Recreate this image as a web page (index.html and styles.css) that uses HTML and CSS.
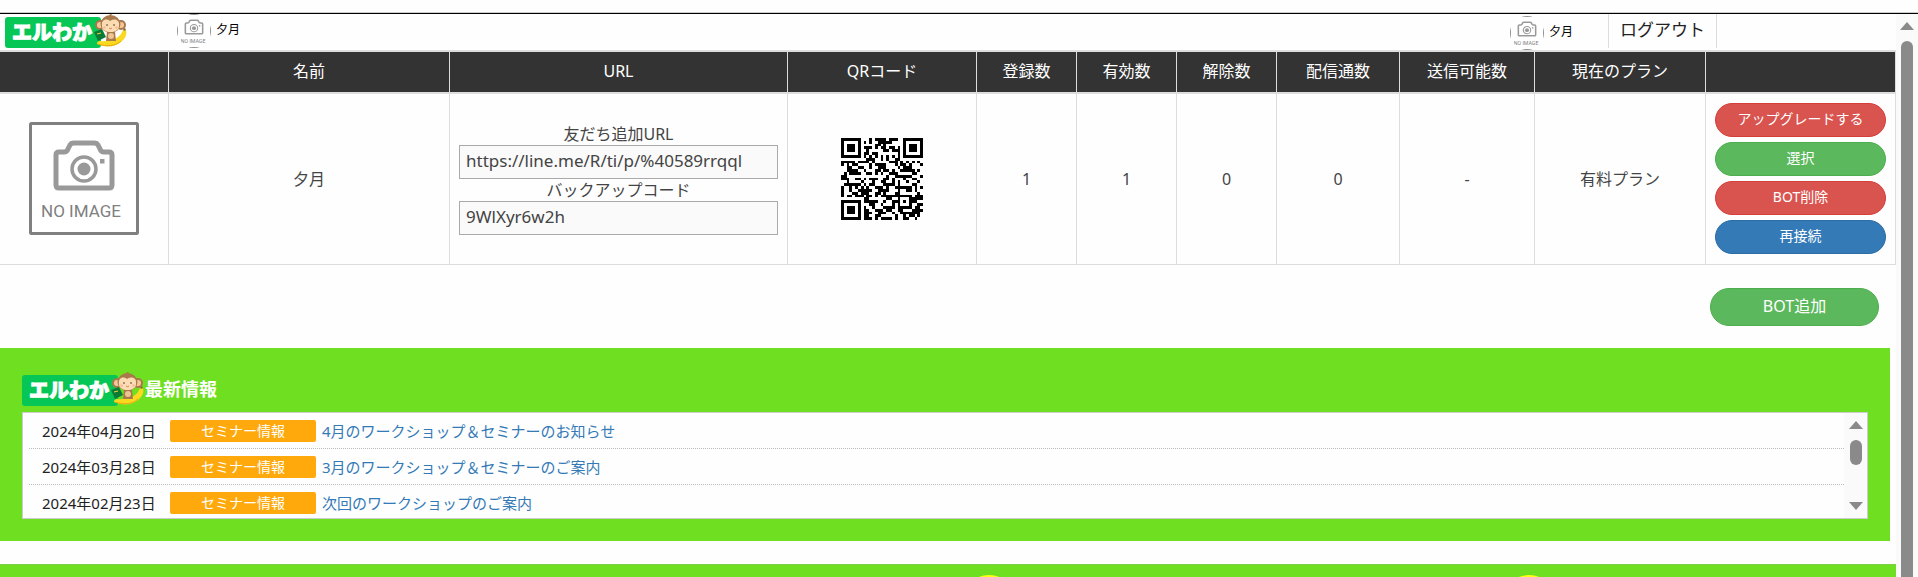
FILE: index.html
```html
<!DOCTYPE html>
<html lang="ja">
<head>
  <meta charset="UTF-8">
  <meta name="viewport" content="width=device-width, initial-scale=1.0">
  <title>エルわか</title>
  <link rel="stylesheet" href="styles.css">
</head>
<body>
  <svg class="defs" aria-hidden="true">
    <symbol id="no-image" viewBox="0 0 110 113" preserveAspectRatio="none">
      <rect width="110" height="113" fill="#fff"/>
      <rect x="1.5" y="1.5" width="107" height="110" rx="1" fill="none" stroke="#808080" stroke-width="3"/>
      <path d="M30 30h5q3 0 4-3l2-4q1-2 4-2h20q3 0 4 2l2 4q1 3 4 3h5q3 0 3 3v30q0 3-3 3H30q-3 0-3-3V33q0-3 3-3z" fill="none" stroke="#999" stroke-width="5"/>
      <circle cx="55" cy="47" r="12" fill="none" stroke="#999" stroke-width="3.5"/>
      <circle cx="55" cy="47" r="6.5" fill="#999"/>
      <rect x="71" y="37" width="4.5" height="4.5" fill="#999"/>
      <text class="no-image-text" x="52" y="95" text-anchor="middle">NO IMAGE</text>
    </symbol>
    <symbol id="logo" viewBox="0 0 122 34">
      <rect x="0" y="3" width="96" height="31" rx="3" fill="#06c755"/>
      <text class="logo-text" x="47" y="26" text-anchor="middle">エルわか</text>
      <path d="M119 15c4 1 3 9-3 13-6 5-15 6-24 2 0-2 1-3 3-3 10 1 19-2 22-9 1-1 1-2 2-3z" fill="#fbd91e"/>
      <path d="M93 30c9 3 18 2 23-3" fill="none" stroke="#e9a913" stroke-width="1"/>
      <path d="M118 15l2-1 1 2-2 1z" fill="#8a6a2a"/>
      <circle cx="95" cy="11" r="5" fill="#a9794b"/>
      <circle cx="116" cy="11" r="5" fill="#a9794b"/>
      <circle cx="95" cy="11" r="3" fill="#f6c79a"/>
      <circle cx="116" cy="11" r="3" fill="#f6c79a"/>
      <path d="M102 18h8l1 9h-10z" fill="#a9794b"/>
      <ellipse cx="106" cy="22" rx="3" ry="3" fill="#eec493"/>
      <path d="M105 2q-1-2 2-2" fill="none" stroke="#a9794b" stroke-width="1"/>
      <ellipse cx="105.5" cy="10" rx="10" ry="9" fill="#a9794b"/>
      <path d="M97 12c-1-6 4-8 8-5 5-3 10-1 9 5 0 4-4 6-8.5 6S97 16 97 12z" fill="#fddcb3"/>
      <circle cx="102" cy="11" r=".8" fill="#4a2f1a"/>
      <circle cx="109" cy="11" r=".8" fill="#4a2f1a"/>
      <circle cx="99.5" cy="13.5" r="1.3" fill="#f9b99c"/>
      <circle cx="111.5" cy="13.5" r="1.3" fill="#f9b99c"/>
      <path d="M104 14q1.5 1.500 3 0" fill="none" stroke="#b5653c" stroke-width=".7"/>
      <path d="M89 18l8-3 4 8-8 4z" fill="#0b7a35"/>
      <path d="M92 20l4-1" stroke="#f5d442" stroke-width="1"/>
    </symbol>
  </svg>

  <div class="top-line"></div>

  <div class="page">
    <main class="content">
      <header class="header">
        <a class="brand" href="#"><svg class="logo" role="img" aria-label="エルわか"><use href="#logo"/></svg></a>
        <div class="user">
          <svg class="avatar" aria-hidden="true"><use href="#no-image"/></svg>
          <span>夕月</span>
        </div>
        <div class="user user-right">
          <svg class="avatar" aria-hidden="true"><use href="#no-image"/></svg>
          <span>夕月</span>
        </div>
        <a class="logout" href="#">ログアウト</a>
      </header>

      <table class="bot-table">
        <colgroup>
          <col class="col-image">
          <col class="col-name">
          <col>
          <col class="col-qr">
          <col class="col-count">
          <col class="col-count">
          <col class="col-count">
          <col class="col-sent">
          <col class="col-limit">
          <col class="col-plan">
          <col class="col-action">
        </colgroup>
        <thead>
          <tr>
            <th></th>
            <th>名前</th>
            <th>URL</th>
            <th>QRコード</th>
            <th>登録数</th>
            <th>有効数</th>
            <th>解除数</th>
            <th>配信通数</th>
            <th>送信可能数</th>
            <th>現在のプラン</th>
            <th></th>
          </tr>
        </thead>
        <tbody>
          <tr>
            <td><svg class="bot-image" aria-hidden="true"><use href="#no-image"/></svg></td>
            <td>夕月</td>
            <td class="url-cell">
              <label for="friend-url">友だち追加URL</label>
              <input type="text" id="friend-url" value="https://line.me/R/ti/p/%40589rrqql" readonly>
              <label for="backup-code">バックアップコード</label>
              <input type="text" id="backup-code" value="9WlXyr6w2h" readonly>
            </td>
            <td><svg class="qr" id="qr" viewBox="0 0 29 29" shape-rendering="crispEdges"></svg></td>
            <td>1</td>
            <td>1</td>
            <td>0</td>
            <td>0</td>
            <td>-</td>
            <td>有料プラン</td>
            <td>
              <div class="actions">
                <button type="button" class="btn btn-danger">アップグレードする</button>
                <button type="button" class="btn btn-success">選択</button>
                <button type="button" class="btn btn-danger">BOT削除</button>
                <button type="button" class="btn btn-primary">再接続</button>
              </div>
            </td>
          </tr>
        </tbody>
      </table>

      <div class="add-area">
        <button type="button" class="btn btn-success btn-add">BOT追加</button>
      </div>

      <section class="news">
        <h2 class="news-title"><svg class="logo" role="img" aria-label="エルわか"><use href="#logo"/></svg>最新情報</h2>
        <div class="news-box">
          <ul class="news-list">
            <li><span class="date">2024年04月20日</span><span class="tag">セミナー情報</span><a href="#">4月のワークショップ＆セミナーのお知らせ</a></li>
            <li><span class="date">2024年03月28日</span><span class="tag">セミナー情報</span><a href="#">3月のワークショップ＆セミナーのご案内</a></li>
            <li><span class="date">2024年02月23日</span><span class="tag">セミナー情報</span><a href="#">次回のワークショップのご案内</a></li>
          </ul>
          <div class="scroll scroll-news">
            <span class="arrow-up"></span>
            <span class="thumb"></span>
            <span class="arrow-down"></span>
          </div>
        </div>
      </section>

      <section class="steps">
        <span class="circle"></span>
        <span class="circle"></span>
      </section>
    </main>

    <div class="scroll scroll-page">
      <span class="arrow-up"></span>
      <span class="thumb"></span>
    </div>
  </div>

  <script src="qr.js"></script>
</body>
</html>
```
FILE: styles.css
```css
* {
  box-sizing: border-box;
}

body {
  margin: 0;
  height: 100vh;
  display: flex;
  flex-direction: column;
  overflow: hidden;
  background: #fefefe;
  color: #444;
  font-family: "Noto Sans", "Noto Sans CJK JP", sans-serif;
  font-size: 16px;
  line-height: 22px;
}

a {
  color: #337ab7;
  text-decoration: none;
}

.defs {
  display: none;
}

.no-image-text {
  font-family: Roboto, sans-serif;
  font-size: 17px;
  fill: #808080;
}

.logo-text {
  font-family: "Noto Sans CJK JP", sans-serif;
  font-size: 20px;
  font-weight: 900;
  fill: #fff;
  stroke: #fff;
  stroke-width: 1px;
  stroke-linejoin: round;
}

.top-line {
  flex: none;
  height: 14px;
  border-bottom: 1px solid #000;
  box-shadow: inset 0 -1px #ccc;
}

.page {
  flex: 1;
  min-height: 0;
  display: flex;
}

.content {
  flex: 1;
  min-width: 0;
  display: flex;
  flex-direction: column;
}

/* header */
.header {
  flex: none;
  display: flex;
  align-items: flex-start;
  height: 36px;
  padding-left: 5px;
}

.logo {
  display: block;
  width: 122px;
  height: 34px;
}

.user {
  display: flex;
  align-items: center;
  gap: 5px;
  margin-left: 50px;
  color: #000;
  font-size: 12px;
}

.user-right {
  margin-left: auto;
  margin-right: 35px;
  padding-top: 2px;
}

.avatar {
  width: 34px;
  height: 34px;
  border-radius: 50%;
}

.user span {
  margin-bottom: 2px;
}

.logout {
  height: 34px;
  margin-right: 179px;
  padding: 5px 11px;
  border-left: 1px solid #ddd;
  border-right: 1px solid #ddd;
  color: #222;
  font-size: 17px;
}

/* bot table */
.bot-table {
  width: 100%;
  table-layout: fixed;
  border-collapse: separate;
  border-spacing: 0;
  text-align: center;
}

.col-image { width: 169px; }
.col-name { width: 281px; }
.col-qr { width: 189px; }
.col-count { width: 100px; }
.col-sent { width: 123px; }
.col-limit { width: 135px; }
.col-plan { width: 171px; }
.col-action { width: 190px; }

.bot-table th {
  height: 44px;
  padding: 0 0 2px;
  border-top: 2px solid #ddd;
  border-bottom: 2px solid #ddd;
  border-right: 1px solid #ddd;
  background: #333;
  color: #fff;
  font-weight: normal;
}

.bot-table td {
  padding: 9px 9px 10px;
  border-bottom: 1px solid #ddd;
  border-right: 1px solid #ddd;
}

.bot-image {
  display: block;
  width: 110px;
  height: 113px;
  margin: 0 auto;
}

.url-cell label {
  display: block;
}

.url-cell input {
  display: block;
  width: 100%;
  height: 34px;
  padding: 0 6px 2px;
  border: 1px solid #aaa;
  background: #fafafa;
  color: #444;
  font: inherit;
  font-size: 17px;
}

.qr {
  display: block;
  width: 82px;
  height: 82px;
  margin: 0 auto;
}

.actions {
  display: flex;
  flex-direction: column;
  gap: 5px;
}

.btn {
  height: 34px;
  padding: 0 12px 4px;
  border: 1px solid;
  border-radius: 20px;
  color: #fff;
  font-family: inherit;
  font-size: 14px;
}

.btn-danger {
  background: #d9534f;
  border-color: #d43f3a;
}

.btn-success {
  background: #5cb85c;
  border-color: #4cae4c;
}

.btn-primary {
  background: #337ab7;
  border-color: #2e6da4;
}

.add-area {
  display: flex;
  justify-content: flex-end;
  padding: 23px 17px 22px;
}

.btn-add {
  width: 169px;
  height: 38px;
  font-size: 16px;
}

/* news */
.news {
  flex: none;
  margin-right: 6px;
  padding: 24px 22px 22px;
  background: #6fdf22;
}

.news-title {
  display: flex;
  align-items: center;
  gap: 1px;
  margin: 0 0 6px;
  color: #fff;
  font-size: 18px;
}

.news-box {
  display: flex;
  height: 107px;
  border: 1px solid #ccc;
  background: #fefefe;
}

.news-list {
  flex: 1;
  margin: 0;
  padding: 0 0 0 6px;
  list-style: none;
  overflow: hidden;
}

.news-list li {
  display: flex;
  align-items: center;
  height: 36px;
  border-bottom: 1px dotted #bbb;
  font-size: 15px;
}

.date {
  width: 141px;
  padding-left: 13px;
  color: #222;
}

.tag {
  width: 146px;
  margin-right: 6px;
  border-radius: 2px;
  background: #ffa90c;
  color: #fff;
  font-size: 14px;
  text-align: center;
}

.date,
.tag {
  flex: none;
}

/* scrollbars */
.scroll {
  flex: none;
  display: flex;
  flex-direction: column;
  align-items: center;
  padding: 8px 0;
  background: #fafafa;
}

.scroll-page {
  width: 22px;
  padding-bottom: 0;
}

.scroll-news {
  width: 23px;
}

.arrow-up,
.arrow-down {
  border-left: 7px solid transparent;
  border-right: 7px solid transparent;
}

.arrow-up {
  border-bottom: 8px solid #8a8a8a;
}

.arrow-down {
  margin-top: auto;
  border-top: 8px solid #8a8a8a;
}

.thumb {
  width: 12px;
  height: 25px;
  margin-top: 11px;
  border-radius: 6px;
  background: #8a8a8a;
}

.scroll-page .thumb {
  flex: 1;
  border-radius: 6px 6px 0 0;
}

/* steps */
.steps {
  flex: 1;
  min-height: 0;
  display: flex;
  gap: 484px;
  margin-top: 23px;
  padding: 10px 0 0 calc(50% + 13px);
  border-top: 1px solid #7bd045;
  background: #6fdf22;
  overflow: hidden;
}

.circle {
  flex: none;
  width: 56px;
  height: 56px;
  border-radius: 50%;
  background: #ffff14;
}
```
FILE: qr.js
```js
// Version 3 QR code, level L, byte mode
const SIZE = 29;
const DATA_COUNT = 55;
const EC_COUNT = 15;
const FORMAT = 0b111110110101010; // level L, mask 2

function toBits(bytes) {
  return bytes.map(b => b.toString(2).padStart(8, '0')).join('');
}

function encode(text) {
  const exp = [], log = [];
  for (let i = 0, x = 1; i < 255; i++) {
    exp[i] = x;
    log[x] = i;
    x <<= 1;
    if (x & 256) x ^= 285;
  }
  const mul = (a, b) => a && b ? exp[(log[a] + log[b]) % 255] : 0;

  const chars = [...text].map(c => c.charCodeAt(0));
  const bits = '0100' + toBits([chars.length]) + toBits(chars) + '0000';
  const data = bits.match(/.{8}/g).map(b => parseInt(b, 2));
  for (let p = 0; data.length < DATA_COUNT; p++) data.push(p % 2 ? 17 : 236);

  let gen = [1];
  for (let i = 0; i < EC_COUNT; i++) {
    const next = new Array(gen.length + 1).fill(0);
    gen.forEach((g, j) => {
      next[j] ^= g;
      next[j + 1] ^= mul(g, exp[i]);
    });
    gen = next;
  }

  const rem = data.concat(new Array(EC_COUNT).fill(0));
  for (let i = 0; i < DATA_COUNT; i++) {
    const factor = rem[i];
    gen.forEach((g, j) => { rem[i + j] ^= mul(g, factor); });
  }
  return toBits(data.concat(rem.slice(DATA_COUNT))) + '0000000';
}

function qrMatrix(text) {
  const m = Array.from({ length: SIZE }, () => new Array(SIZE).fill(null));

  function finder(r, c) {
    for (let y = -1; y < 8; y++) {
      for (let x = -1; x < 8; x++) {
        if (r + y < 0 || r + y >= SIZE || c + x < 0 || c + x >= SIZE) continue;
        const d = Math.max(Math.abs(y - 3), Math.abs(x - 3));
        m[r + y][c + x] = d !== 2 && d !== 4 ? 1 : 0;
      }
    }
  }
  finder(0, 0);
  finder(0, SIZE - 7);
  finder(SIZE - 7, 0);

  for (let y = -2; y < 3; y++) {
    for (let x = -2; x < 3; x++) {
      m[22 + y][22 + x] = Math.max(Math.abs(x), Math.abs(y)) !== 1 ? 1 : 0;
    }
  }
  for (let i = 8; i < SIZE - 8; i++) m[6][i] = m[i][6] = (i + 1) % 2;

  const bit = i => (FORMAT >> i) & 1;
  for (let i = 0; i < 6; i++) m[i][8] = bit(i);
  m[7][8] = bit(6);
  m[8][8] = bit(7);
  m[8][7] = bit(8);
  for (let i = 9; i < 15; i++) m[8][14 - i] = bit(i);
  for (let i = 0; i < 8; i++) m[8][SIZE - 1 - i] = bit(i);
  for (let i = 8; i < 15; i++) m[SIZE - 15 + i][8] = bit(i);
  m[SIZE - 8][8] = 1;

  const bits = encode(text);
  let k = 0, up = true;
  for (let right = SIZE - 1; right > 0; right -= 2) {
    if (right === 6) right = 5;
    for (let v = 0; v < SIZE; v++) {
      for (let j = 0; j < 2; j++) {
        const x = right - j;
        const y = up ? SIZE - 1 - v : v;
        if (m[y][x] === null) m[y][x] = Number(bits[k++]) ^ (x % 3 === 0 ? 1 : 0);
      }
    }
    up = !up;
  }
  return m;
}

let d = '';
qrMatrix(document.getElementById('friend-url').value).forEach((row, y) => {
  row.forEach((v, x) => {
    if (v) d += `M${x} ${y}h1v1h-1z`;
  });
});
document.getElementById('qr').innerHTML = `<path d="${d}"/>`;
```
